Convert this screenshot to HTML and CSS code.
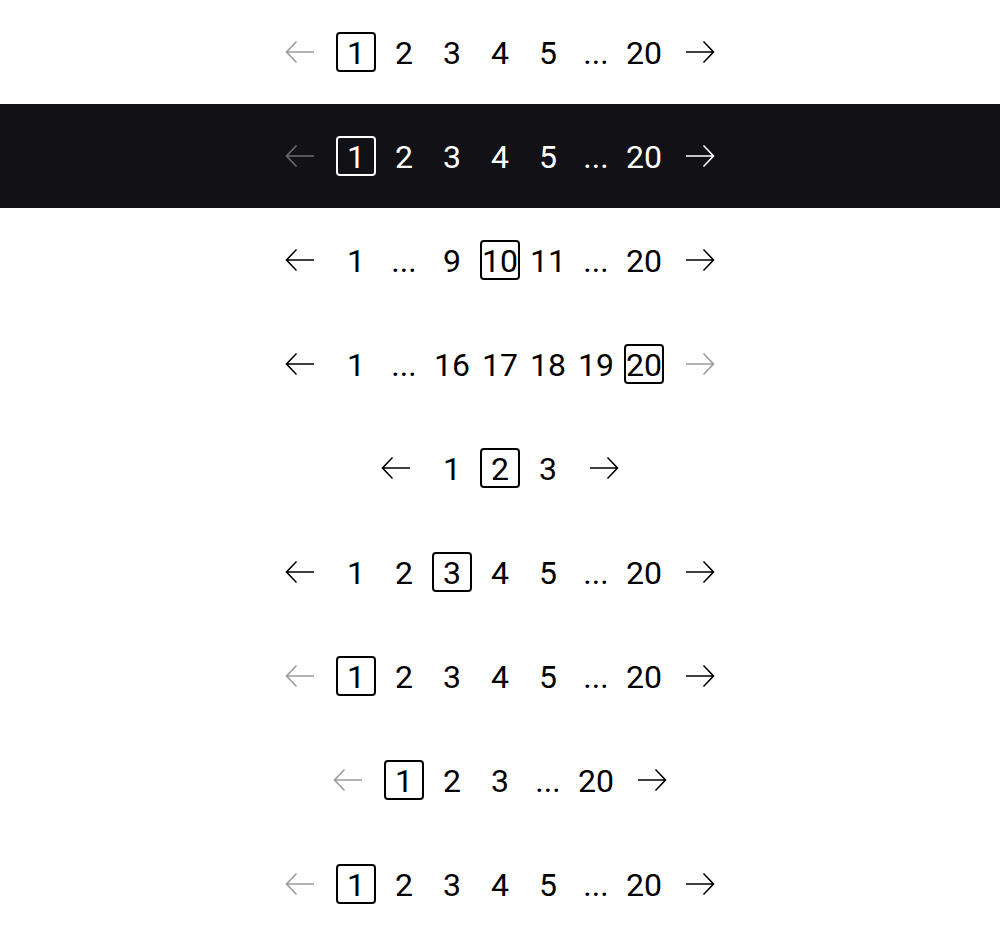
FILE: index.html
```html
<!DOCTYPE html>
<html>
<head>
<meta charset="utf-8">
<link rel="stylesheet" href="styles.css">
</head>
<body>
<div class="rows">

<div class="row">
  <nav class="pager">
    <span class="arrow disabled"><svg viewBox="0 0 30 24"><path d="M29 12H1.5M11.5 1.5L1.5 12l10 10.5"/></svg></span>
    <span class="item current">1</span><span class="item">2</span><span class="item">3</span><span class="item">4</span><span class="item">5</span><span class="item dots">...</span><span class="item">20</span>
    <span class="arrow"><svg viewBox="0 0 30 24"><path d="M1 12h27.5M18.5 1.5l10 10.5-10 10.5"/></svg></span>
  </nav>
</div>

<div class="row dark">
  <nav class="pager">
    <span class="arrow disabled"><svg viewBox="0 0 30 24"><path d="M29 12H1.5M11.5 1.5L1.5 12l10 10.5"/></svg></span>
    <span class="item current">1</span><span class="item">2</span><span class="item">3</span><span class="item">4</span><span class="item">5</span><span class="item dots">...</span><span class="item">20</span>
    <span class="arrow"><svg viewBox="0 0 30 24"><path d="M1 12h27.5M18.5 1.5l10 10.5-10 10.5"/></svg></span>
  </nav>
</div>

<div class="row">
  <nav class="pager">
    <span class="arrow"><svg viewBox="0 0 30 24"><path d="M29 12H1.5M11.5 1.5L1.5 12l10 10.5"/></svg></span>
    <span class="item">1</span><span class="item dots">...</span><span class="item">9</span><span class="item current">10</span><span class="item">11</span><span class="item dots">...</span><span class="item">20</span>
    <span class="arrow"><svg viewBox="0 0 30 24"><path d="M1 12h27.5M18.5 1.5l10 10.5-10 10.5"/></svg></span>
  </nav>
</div>

<div class="row">
  <nav class="pager">
    <span class="arrow"><svg viewBox="0 0 30 24"><path d="M29 12H1.5M11.5 1.5L1.5 12l10 10.5"/></svg></span>
    <span class="item">1</span><span class="item dots">...</span><span class="item">16</span><span class="item">17</span><span class="item">18</span><span class="item">19</span><span class="item current">20</span>
    <span class="arrow disabled"><svg viewBox="0 0 30 24"><path d="M1 12h27.5M18.5 1.5l10 10.5-10 10.5"/></svg></span>
  </nav>
</div>

<div class="row">
  <nav class="pager">
    <span class="arrow"><svg viewBox="0 0 30 24"><path d="M29 12H1.5M11.5 1.5L1.5 12l10 10.5"/></svg></span>
    <span class="item">1</span><span class="item current">2</span><span class="item">3</span>
    <span class="arrow"><svg viewBox="0 0 30 24"><path d="M1 12h27.5M18.5 1.5l10 10.5-10 10.5"/></svg></span>
  </nav>
</div>

<div class="row">
  <nav class="pager">
    <span class="arrow"><svg viewBox="0 0 30 24"><path d="M29 12H1.5M11.5 1.5L1.5 12l10 10.5"/></svg></span>
    <span class="item">1</span><span class="item">2</span><span class="item current">3</span><span class="item">4</span><span class="item">5</span><span class="item dots">...</span><span class="item">20</span>
    <span class="arrow"><svg viewBox="0 0 30 24"><path d="M1 12h27.5M18.5 1.5l10 10.5-10 10.5"/></svg></span>
  </nav>
</div>

<div class="row">
  <nav class="pager">
    <span class="arrow disabled"><svg viewBox="0 0 30 24"><path d="M29 12H1.5M11.5 1.5L1.5 12l10 10.5"/></svg></span>
    <span class="item current">1</span><span class="item">2</span><span class="item">3</span><span class="item">4</span><span class="item">5</span><span class="item dots">...</span><span class="item">20</span>
    <span class="arrow"><svg viewBox="0 0 30 24"><path d="M1 12h27.5M18.5 1.5l10 10.5-10 10.5"/></svg></span>
  </nav>
</div>

<div class="row">
  <nav class="pager">
    <span class="arrow disabled"><svg viewBox="0 0 30 24"><path d="M29 12H1.5M11.5 1.5L1.5 12l10 10.5"/></svg></span>
    <span class="item current">1</span><span class="item">2</span><span class="item">3</span><span class="item dots">...</span><span class="item">20</span>
    <span class="arrow"><svg viewBox="0 0 30 24"><path d="M1 12h27.5M18.5 1.5l10 10.5-10 10.5"/></svg></span>
  </nav>
</div>

<div class="row">
  <nav class="pager">
    <span class="arrow disabled"><svg viewBox="0 0 30 24"><path d="M29 12H1.5M11.5 1.5L1.5 12l10 10.5"/></svg></span>
    <span class="item current">1</span><span class="item">2</span><span class="item">3</span><span class="item">4</span><span class="item">5</span><span class="item dots">...</span><span class="item">20</span>
    <span class="arrow"><svg viewBox="0 0 30 24"><path d="M1 12h27.5M18.5 1.5l10 10.5-10 10.5"/></svg></span>
  </nav>
</div>

</div>
</body>
</html>
```

FILE: styles.css
```css
* { box-sizing: border-box; }
html, body { margin: 0; padding: 0; background: #fff; }
body { font-family: Roboto, "Noto Sans", sans-serif; color: #000; }

.rows { display: flex; flex-direction: column; }

.row {
  height: 104px;
  display: flex;
  align-items: center;
  justify-content: center;
  background: #fff;
  color: #000;
}
.row.dark { background: #111116; color: #fff; }

.pager {
  display: flex;
  align-items: center;
  gap: 8px;
}

.arrow {
  width: 40px;
  height: 40px;
  display: flex;
  align-items: center;
  justify-content: center;
  color: currentColor;
}
.arrow:first-child { margin-right: 8px; }
.arrow:last-child { margin-left: 8px; }
.arrow svg {
  width: 30px;
  height: 24px;
  fill: none;
  stroke: currentColor;
  stroke-width: 1.6;
  stroke-linecap: butt;
  stroke-linejoin: miter;
}
.arrow.disabled { color: #9a9a9a; }
.dark .arrow.disabled { color: #6e6e72; }

.item {
  width: 40px;
  height: 40px;
  display: flex;
  align-items: center;
  justify-content: center;
  padding-top: 1px;
  font-size: 32px;
  line-height: 1;
  font-weight: 400;
  border: 2px solid transparent;
  border-radius: 4px;
  white-space: nowrap;
}
.item.current { border-color: currentColor; }
```
